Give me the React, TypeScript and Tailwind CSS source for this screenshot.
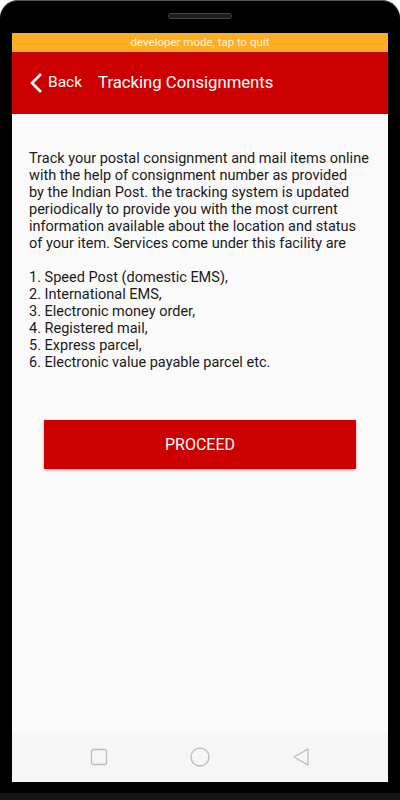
import React from 'react';

const intro = [
  'Track your postal consignment and mail items online',
  'with the help of consignment number as provided',
  'by the Indian Post. the tracking system is updated',
  'periodically to provide you with the most current',
  'information available about the location and status',
  'of your item. Services come under this facility are',
];

const services = [
  'Speed Post (domestic EMS),',
  'International EMS,',
  'Electronic money order,',
  'Registered mail,',
  'Express parcel,',
  'Electronic value payable parcel etc.',
];

function NavBar() {
  return (
    <div className="flex h-[50px] items-center justify-center gap-[81px] bg-[#f6f6f6]">
      <svg width="18" height="18" viewBox="0 0 18 18">
        <rect x="1.5" y="1.5" width="15" height="15" rx="2" fill="none" stroke="#bdbdbd" strokeWidth="1.3" />
      </svg>
      <svg width="22" height="22" viewBox="0 0 22 22">
        <circle cx="11" cy="11" r="9" fill="none" stroke="#bdbdbd" strokeWidth="1.3" />
      </svg>
      <svg width="18" height="20" viewBox="0 0 18 20">
        <path d="M16 2 L2 10 L16 18 Z" fill="none" stroke="#bdbdbd" strokeWidth="1.3" strokeLinejoin="round" />
      </svg>
    </div>
  );
}

export default function App() {
  return (
    <div className="h-[800px] w-[400px] bg-white font-['Roboto',sans-serif]">
      <div className="flex h-[793px] flex-col rounded-t-[18px] border-t border-[#555] bg-black px-[12px] pb-[11px] pt-[32px]">
        <div className="flex flex-1 flex-col bg-[#fafafa]">
          <div className="flex h-[19px] items-center justify-center bg-[#fdae24] text-[11.5px] text-[#fff3d6]">
            developer mode, tap to quit
          </div>
          <div className="flex h-[62px] items-center bg-[#cc0000] text-white">
            <div className="flex items-center pl-[17px]">
              <svg width="14" height="22" viewBox="0 0 14 22">
                <path d="M12 2 L3 11 L12 20" fill="none" stroke="white" strokeWidth="2.6" />
              </svg>
              <span className="ml-[5px] text-[15.5px]">Back</span>
            </div>
            <span className="ml-[16px] text-[16.7px]">Tracking Consignments</span>
          </div>
          <div className="flex-1">
            <div className="px-[17px] pt-[36px] text-[14.5px] leading-[17px] text-[#1a1a1a]">
              {intro.map((l) => (
                <div key={l} className="whitespace-nowrap">{l}</div>
              ))}
              <div className="h-[17px]" />
              {services.map((s, i) => (
                <div key={s} className="whitespace-nowrap">{`${i + 1}. ${s}`}</div>
              ))}
            </div>
            <div className="px-[32px] pt-[49px]">
              <button className="flex h-[49px] w-full items-center justify-center bg-[#cc0000] text-[16px] text-white shadow-[0_1px_3px_rgba(0,0,0,0.35)]">
                PROCEED
              </button>
            </div>
          </div>
          <NavBar />
        </div>
      </div>
      <div className="h-[7px] bg-[#151515]" />
      <div className="pointer-events-none absolute left-[168px] top-[13px] h-[6px] w-[64px] rounded-full border border-[#444] bg-[#1e1e1e]" />
    </div>
  );
}
